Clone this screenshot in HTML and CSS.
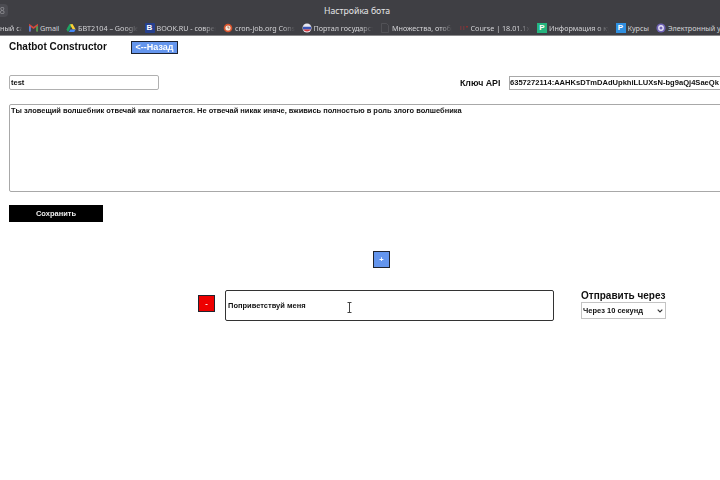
FILE: index.html
```html
<!DOCTYPE html>
<html lang="ru">
<head>
<meta charset="utf-8">
<title>Настройка бота</title>
<link rel="stylesheet" href="styles.css">
</head>
<body>
<header class="chrome">
  <div class="titlebar">
    <div class="pill">8</div>
    <div class="wintitle">Настройка бота</div>
  </div>
  <nav class="bookmarks">
    <a class="bm bm-first"><span class="lbl">ный сайт</span></a>
    <a class="bm"><svg class="ico ico-s" viewBox="0 0 10 10"><path d="M1 9V2l4 3 4-3v7" fill="none" stroke="#d9483b" stroke-width="1.8"/><path d="M1 9V3" stroke="#4a88e8" stroke-width="1.8"/><path d="M9 9V3" stroke="#3aa757" stroke-width="1.8"/></svg><span class="lbl lbl-gmail">Gmail</span></a>
    <a class="bm"><svg class="ico" viewBox="0 0 10 10"><path d="M3.500 1h3L4 5.500H1z" fill="#1fa463"/><path d="M6.500 1 9.700 6.500H6.700L4 1.500z" fill="#ffcf33"/><path d="M2.800 9 4.300 6.500h5.400L8.200 9z" fill="#4486f4"/><path d="M.4 6.500 2 9l2-3.300L2.500 3.500z" fill="#1fa463"/></svg><span class="lbl">БВТ2104 – Google Диск</span></a>
    <a class="bm"><span class="bico">B</span><span class="lbl">BOOK.RU - современная</span></a>
    <a class="bm"><svg class="ico" viewBox="0 0 10 10"><circle cx="5" cy="5" r="4.300" fill="#d8532c"/><circle cx="5" cy="5" r="2.600" fill="#f5e9dc"/><path d="M5 3.200V5h1.500" fill="none" stroke="#8a4a30" stroke-width=".7"/></svg><span class="lbl">cron-job.org Console</span></a>
    <a class="bm"><svg class="ico" viewBox="0 0 10 10"><circle cx="5" cy="5" r="4.500" fill="#e8e8f0"/><path d="M1.100 3.700h7.800a4.500 4.500 0 0 1 0 2.700H1.100a4.500 4.500 0 0 1 0-2.700z" fill="#3a56b8"/><path d="M1.200 6.400h7.600A4.500 4.500 0 0 1 1.200 6.400z" fill="#d63a3f"/></svg><span class="lbl">Портал государственных</span></a>
    <a class="bm"><svg class="ico" viewBox="0 0 10 10"><path d="M1.500.500h5l2 2v7h-7z" fill="none" stroke="#55555a" stroke-width=".8"/></svg><span class="lbl">Множества, отображения</span></a>
    <a class="bm"><svg class="ico" viewBox="0 0 10 10"><path d="M1 3h1.500v4H1zM4 3h1.500v4H4z" fill="#6b3a3f"/><path d="M7 3h2v1.500H7z" fill="#8a3030"/></svg><span class="lbl">Course | 18.01.1x | edX</span></a>
    <a class="bm"><span class="pico pico-g">P</span><span class="lbl">Информация о курсе</span></a>
    <a class="bm"><span class="pico pico-b">P</span><span class="lbl lbl-auto">Курсы</span></a>
    <a class="bm"><svg class="ico" viewBox="0 0 10 10"><circle cx="5" cy="5" r="4.600" fill="#6f63b5"/><circle cx="5" cy="5" r="2.900" fill="#e6e2f5"/><circle cx="5" cy="5" r="1.500" fill="#6f63b5"/></svg><span class="lbl lbl-last">Электронный университет</span></a>
  </nav>
</header>

<main class="page">
  <div class="top">
    <h1 class="brand">Chatbot Constructor</h1>
    <button class="back" type="button">&lt;--Назад</button>
  </div>

  <div class="fields">
    <input class="name" type="text" value="test">
    <label class="keylabel">Ключ API</label>
    <input class="key" type="text" value="6357272114:AAHKsDTmDAdUpkhiLLUXsN-bg9aQj4SaeQk">
  </div>

  <textarea class="prompt">Ты зловещий волшебник отвечай как полагается. Не отвечай никак иначе, вживись полностью в роль злого волшебника</textarea>

  <button class="save" type="button">Сохранить</button>

  <div class="addrow"><button class="sq plus" type="button">+</button></div>

  <div class="step">
    <button class="sq minus" type="button">-</button>
    <div class="msgwrap">
      <textarea class="msg">Поприветствуй меня</textarea>
      <svg class="cursor" viewBox="0 0 5 11"><path d="M.5.500h4M.5 10.500h4M2.500.500v10" fill="none" stroke="#444" stroke-width="1"/></svg>
    </div>
    <div class="delay">
      <div class="delaytitle">Отправить через</div>
      <select class="delaysel"><option>Через 10 секунд</option></select>
    </div>
  </div>
</main>
</body>
</html>
```

FILE: styles.css
```css
* { box-sizing: border-box; }
html, body { margin: 0; padding: 0; }
body {
  width: 720px;
  height: 480px;
  overflow: hidden;
  background: #fff;
  font-family: "Liberation Sans", Arial, sans-serif;
  color: #111;
}

/* browser chrome */
.chrome { background: #3f3f44; height: 36px; border-bottom: 1px solid #8a8a8c; filter: blur(.35px); }
.titlebar {
  position: relative;
  height: 21px;
  display: flex;
  align-items: center;
  justify-content: center;
  padding-right: 6px;
}
.pill {
  position: absolute;
  left: -14px;
  top: 4px;
  width: 22px;
  height: 13px;
  background: #4c4c52;
  border-radius: 4px;
  color: #8d8d92;
  font: 9px/13px "Noto Sans", sans-serif;
  text-align: right;
  padding-right: 3px;
}
.wintitle { font: 8.700px "Noto Sans", sans-serif; color: #e4e4e6; }
.bookmarks {
  display: flex;
  align-items: center;
  gap: 7px;
  height: 14px;
  overflow: hidden;
  font: 7.200px "Noto Sans", sans-serif;
  color: #d3d3d6;
}
.bm { display: flex; align-items: center; gap: 2px; flex: none; white-space: nowrap; }
.bm-first { width: 22px; overflow: hidden; }
.lbl {
  display: block;
  width: 59.500px;
  overflow: hidden;
  -webkit-mask-image: linear-gradient(90deg, #000 80%, transparent);
  mask-image: linear-gradient(90deg, #000 80%, transparent);
}
.lbl-gmail { width: 19px; -webkit-mask-image: none; mask-image: none; }
.lbl-auto { width: auto; -webkit-mask-image: none; mask-image: none; }
.lbl-last { width: 70px; -webkit-mask-image: none; mask-image: none; }
.ico { width: 10px; height: 10px; flex: none; }
.ico-s { width: 9px; }
.bico, .pico {
  width: 10px;
  height: 10px;
  flex: none;
  font: bold 8px/10px "Liberation Sans", sans-serif;
  text-align: center;
  color: #fff;
}
.bico { background: #26408f; border-radius: 1px; }
.pico-g { background: #25b47e; }
.pico-b { background: #2f8fe0; }

/* page */
.page { padding-left: 9px; font-weight: bold; filter: blur(.35px); }
.top { display: flex; align-items: center; height: 20px; margin-top: 1px; }
.brand { margin: 0; width: 122px; flex: none; font-size: 10px; font-weight: bold; line-height: 20px; }
.back {
  width: 47px;
  height: 13px;
  padding: 0;
  border: 1.500px solid #1d2230;
  background: #6495ed;
  color: #fff;
  font: bold 9px/10px "Liberation Sans", sans-serif;
}

.fields { display: flex; align-items: center; height: 17px; margin-top: 17px; }
.name {
  width: 150px;
  height: 15px;
  padding: 0 1px;
  flex: none;
  border: 1px solid #b0b0b0;
  border-radius: 2px;
  font: bold 7.500px "Liberation Sans", sans-serif;
  color: #111;
}
.keylabel { margin-left: 301px; width: 49px; font-size: 8.800px; font-weight: bold; flex: none; }
.key {
  width: 260px;
  height: 14px;
  padding: 0;
  flex: none;
  border: 1px solid #a8a8a8;
  font: bold 7.570px "Liberation Sans", sans-serif;
  color: #111;
}

.prompt {
  display: block;
  width: 760px;
  height: 88px;
  margin-top: 13px;
  padding: 1px 1px;
  border: 1px solid #a8a8a8;
  border-radius: 2px;
  resize: none;
  font: bold 7.470px/9px "Liberation Sans", sans-serif;
  color: #111;
}
.save {
  display: block;
  width: 94px;
  height: 17px;
  margin-top: 13px;
  padding: 0;
  border: 0;
  background: #000;
  color: #eee;
  font: bold 7.500px "Liberation Sans", sans-serif;
}

.addrow { padding-left: 364px; margin-top: 29px; height: 17px; }
.sq {
  display: block;
  width: 17px;
  height: 17px;
  padding: 0;
  border: 1px solid #20242e;
  color: #fff;
  font: bold 7.500px "Liberation Sans", sans-serif;
  flex: none;
}
.plus { background: #6495ed; }
.minus { background: #ee0000; margin-left: 189px; margin-top: 5px; }

.step { display: flex; align-items: flex-start; margin-top: 22px; }
.msgwrap { position: relative; width: 329px; height: 31px; margin-left: 10px; flex: none; }
.msg {
  display: block;
  width: 100%;
  height: 100%;
  padding: 10px 2px 0;
  border: 1.500px solid #333;
  border-radius: 2px;
  resize: none;
  overflow: hidden;
  font: bold 7.500px/10px "Liberation Sans", sans-serif;
  color: #111;
}
.cursor { position: absolute; left: 122px; top: 12px; width: 5px; height: 11px; }
.delay { margin-left: 27px; width: 85px; flex: none; }
.delaytitle { font-size: 10px; line-height: 11px; white-space: nowrap; }
.delaysel {
  display: block;
  width: 85px;
  height: 17px;
  margin-top: 1px;
  padding: 0 1px;
  border: 1px solid #c4c4c4;
  border-radius: 0;
  -webkit-appearance: none;
  appearance: none;
  background: #fff url("data:image/svg+xml,%3Csvg xmlns='http://www.w3.org/2000/svg' viewBox='0 0 6 4'%3E%3Cpath d='M.7.700 3 3l2.300-2.300' fill='none' stroke='%23333' stroke-width='1.100'/%3E%3C/svg%3E") no-repeat right 2px center / 6px 4px;
  font: bold 7.500px "Liberation Sans", sans-serif;
  color: #111;
}
```
